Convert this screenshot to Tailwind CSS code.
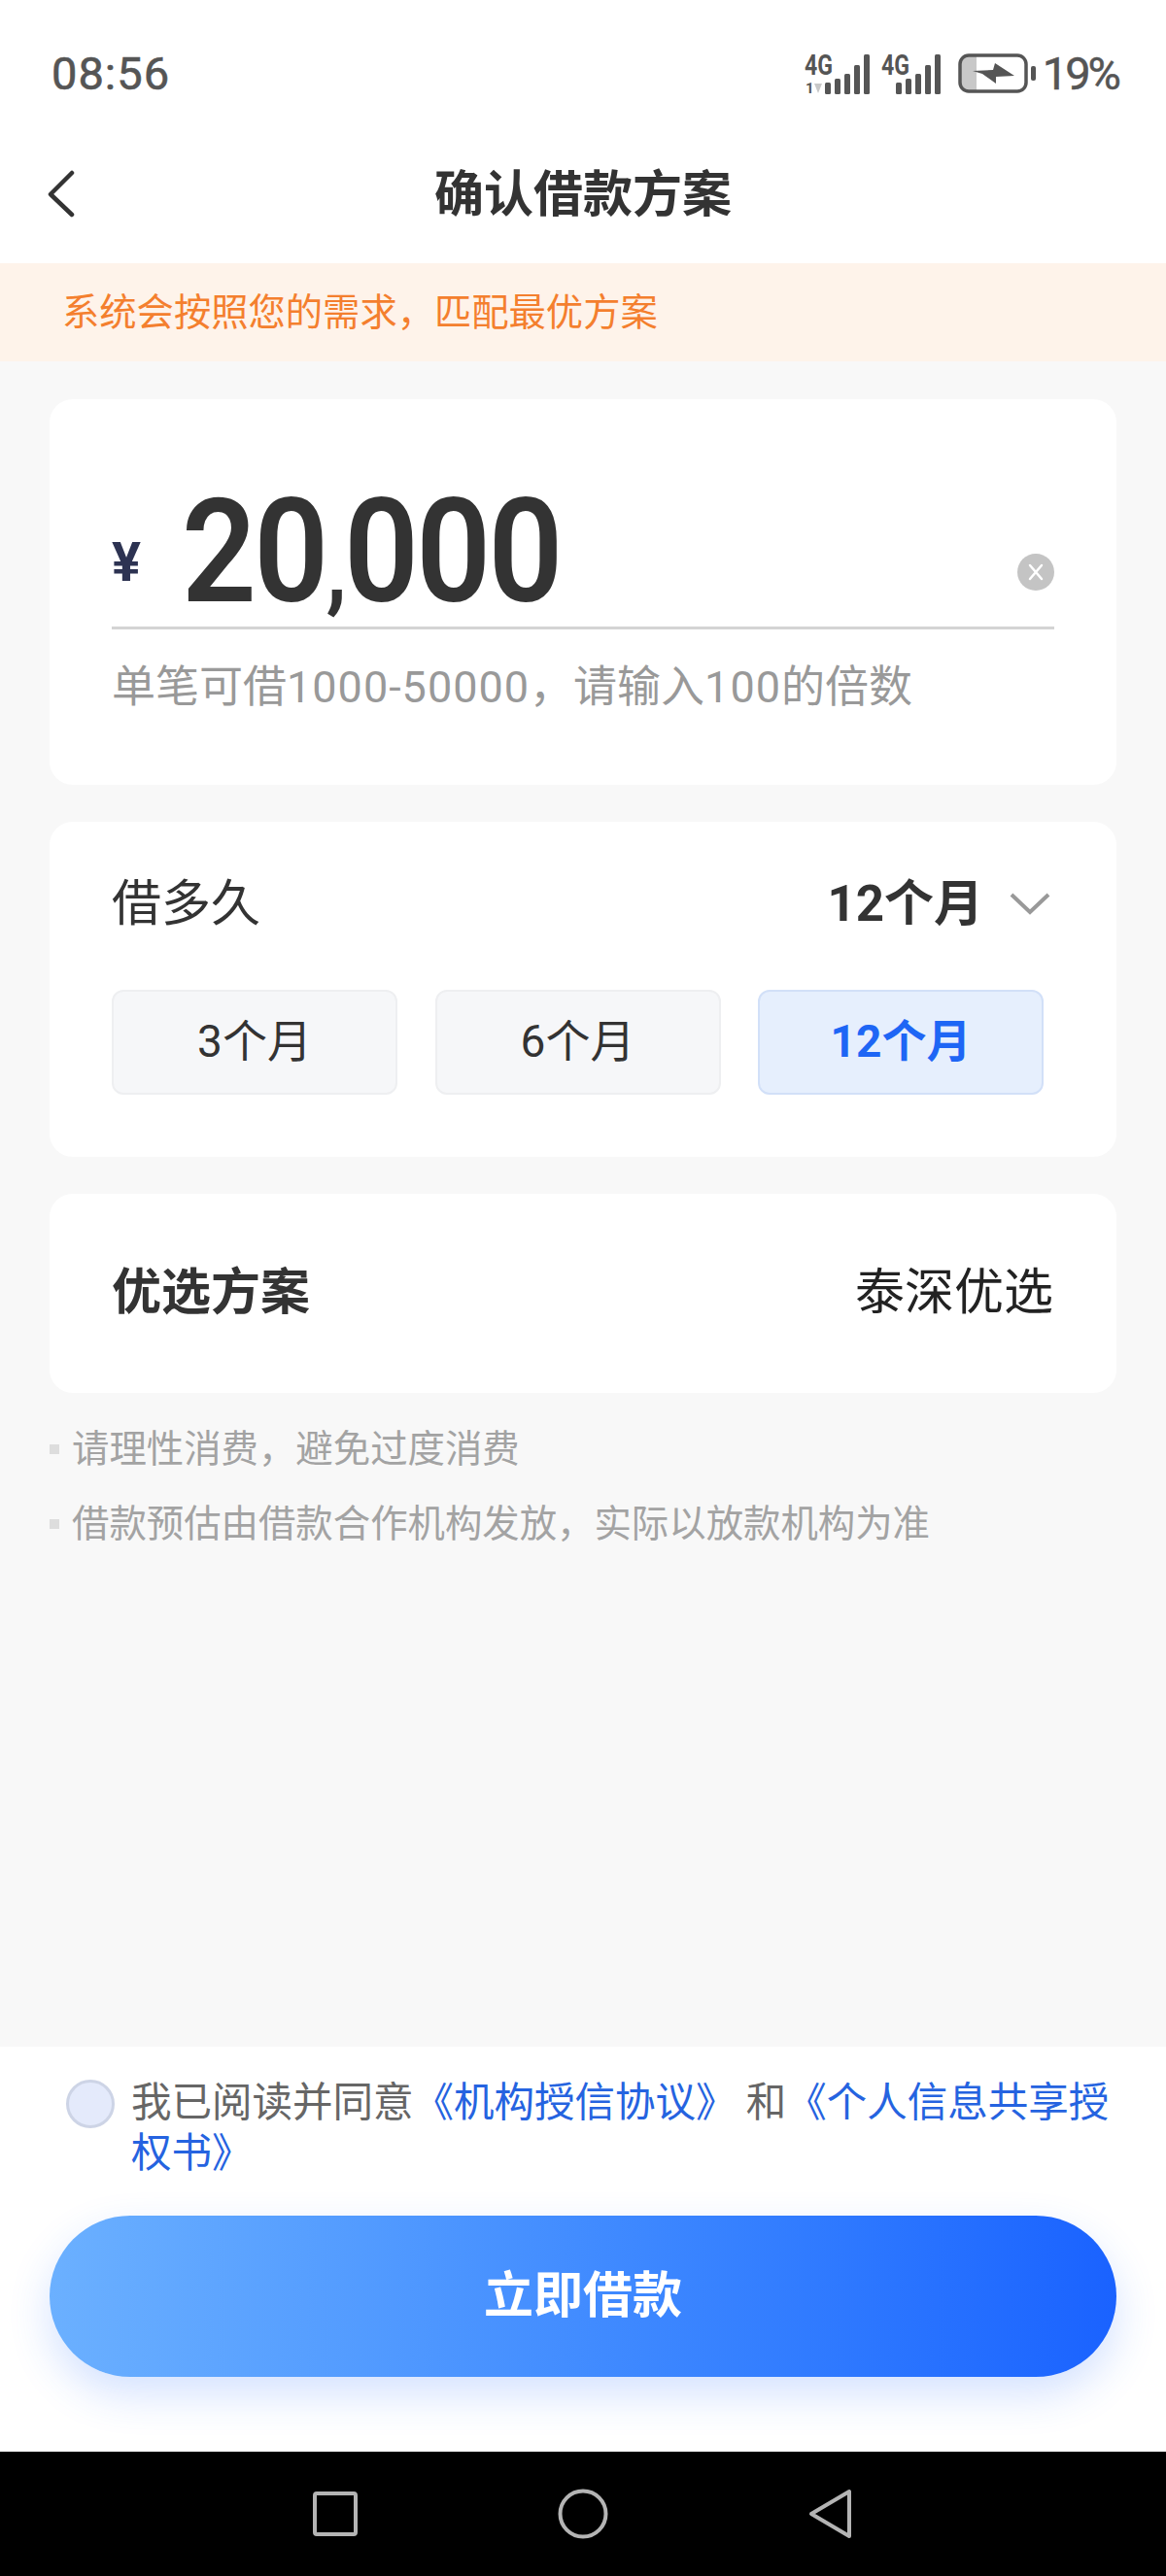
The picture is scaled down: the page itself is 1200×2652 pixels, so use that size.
<!DOCTYPE html>
<html lang="zh-CN">
<head>
    <meta charset="UTF-8">
    <meta name="viewport" content="width=device-width, initial-scale=1.0">
    <title>确认借款方案</title>
    <script src="https://cdn.jsdelivr.net/npm/@tailwindcss/browser@4"></script>
</head>
<body class="bg-[#f8f8f8] font-['Roboto','Noto_Sans_CJK_SC',sans-serif] text-[#333333]">
    <div class="flex h-[2652px] w-[1200px] flex-col overflow-hidden">
        <!-- Status bar -->
        <div class="flex h-[152px] shrink-0 items-start justify-between bg-white pl-[53px] pr-[49px] pt-[48px]">
            <span class="text-[47px] leading-[56px] tracking-[1px] text-[#555555] [-webkit-text-stroke:0.6px_#555555]">08:56</span>
            <div class="flex items-start">
                <svg class="mt-[8px] overflow-visible" width="68" height="41" viewBox="0 0 68 41" fill="#555555">
                    <text x="0" y="21" font-family="Roboto" font-weight="700" font-size="29" textLength="29" lengthAdjust="spacingAndGlyphs">4G</text>
                    <text x="1" y="40" font-family="Roboto" font-weight="700" font-size="15">1</text>
                    <path d="M10 30h8l-4 10z" fill="#c8c8c8"/>
                    <rect x="21" y="29" width="6" height="12" rx="1.5"/>
                    <rect x="31" y="25" width="6" height="16" rx="1.5"/>
                    <rect x="41" y="20" width="6" height="21" rx="1.5"/>
                    <rect x="51" y="11" width="6" height="30" rx="1.5"/>
                    <rect x="61" y="0" width="6" height="41" rx="1.5"/>
                </svg>
                <svg class="ml-[11px] mt-[8px] overflow-visible" width="62" height="41" viewBox="0 0 62 41" fill="#555555">
                    <text x="0" y="21" font-family="Roboto" font-weight="700" font-size="29" textLength="29" lengthAdjust="spacingAndGlyphs">4G</text>
                    <rect x="15" y="29" width="6" height="12" rx="1.5"/>
                    <rect x="25" y="25" width="6" height="16" rx="1.5"/>
                    <rect x="35" y="20" width="6" height="21" rx="1.5"/>
                    <rect x="45" y="11" width="6" height="30" rx="1.5"/>
                    <rect x="55" y="0" width="6" height="41" rx="1.5"/>
                </svg>
                <svg class="ml-[17px] mt-[7px]" width="81" height="41" viewBox="0 0 81 41">
                    <path d="M9 2h10v37H9a7 7 0 0 1-7-7V9a7 7 0 0 1 7-7z" fill="#c8c8c8"/>
                    <rect x="2" y="2" width="68" height="37" rx="9" fill="none" stroke="#555555" stroke-width="3.5"/>
                    <path d="M15 18l21-1 2-7 20 13-19 1v7l-14-10z" fill="#555555"/>
                    <rect x="75" y="13" width="5" height="15" rx="2" fill="#555555"/>
                </svg>
                <span class="ml-[6px] text-[47px] leading-[56px] tracking-[-3px] text-[#555555] [-webkit-text-stroke:0.5px_#555555]">19%</span>
            </div>
        </div>

        <!-- Nav -->
        <div class="relative flex h-[119px] shrink-0 items-center justify-center bg-white">
            <svg class="absolute left-[48px] top-[22px]" width="30" height="50" viewBox="0 0 30 50" fill="none" stroke="#333333" stroke-width="4.5" stroke-linecap="round" stroke-linejoin="round">
                <path d="M26 4L4 26l22 21"/>
            </svg>
            <h1 class="mb-[22px] text-[51px] leading-none font-bold">确认借款方案</h1>
        </div>

        <!-- Notice -->
        <div class="flex h-[101px] shrink-0 items-center bg-[#fef3ea] pl-[64px] text-[38.3px] text-[#f47f2e]">系统会按照您的需求，匹配最优方案</div>

        <main class="flex flex-1 flex-col px-[51px] pt-[39px]">
            <!-- Amount -->
            <section class="flex h-[397px] flex-col rounded-[24px] bg-white px-[64px] pt-[69px]">
                <div class="flex h-[168px] items-end border-b-[3px] border-[#d4d4d4]">
                    <span class="mb-[38px] w-[72px] text-[56px] leading-none font-bold text-[#2d3352]">¥</span>
                    <span class="-mb-[5px] origin-left scale-x-[0.91] text-[148px] leading-[162px] font-semibold tracking-[-3px]">20<span class="text-[100px] leading-none">,</span>000</span>
                    <span class="mb-[37px] ml-auto flex h-[38px] w-[38px] items-center justify-center rounded-full bg-[#c4c4c4]">
                        <svg width="20" height="20" viewBox="0 0 20 20" stroke="#ffffff" stroke-width="2.5" stroke-linecap="round"><path d="M4 3l12 14M16 3L4 17"/></svg>
                    </span>
                </div>
                <p class="mt-[32px] text-[45px] leading-[56px] text-[#999999]">单笔可借<span class="tracking-[1px]">1000-50000</span>，请输入<span class="tracking-[1px]">100</span>的倍数</p>
            </section>

            <!-- Term -->
            <section class="mt-[38px] h-[345px] rounded-[24px] bg-white px-[64px] pt-[55px]">
                <div class="flex h-[58px] items-center justify-between">
                    <span class="text-[51px] leading-none">借多久</span>
                    <div class="flex items-center">
                        <span class="text-[51px] leading-none font-bold">12个月</span>
                        <svg class="ml-[27px] mr-[4px]" width="42" height="24" viewBox="0 0 42 24" fill="none" stroke="#999999" stroke-width="4"><path d="M2 3l19 18L40 3"/></svg>
                    </div>
                </div>
                <div class="mt-[60px] flex gap-[38.5px]">
                    <div class="flex h-[108px] w-[294px] items-center justify-center rounded-[12px] border-2 border-[#eeeff1] bg-[#f6f7f9] pb-[2px] text-[46px]">3个月</div>
                    <div class="flex h-[108px] w-[294px] items-center justify-center rounded-[12px] border-2 border-[#eeeff1] bg-[#f6f7f9] pb-[2px] text-[46px]">6个月</div>
                    <div class="flex h-[108px] w-[294px] items-center justify-center rounded-[12px] border-2 border-[#d2e0f8] bg-[#e6effd] pb-[2px] text-[46px] font-bold text-[#1e66f5]">12个月</div>
                </div>
            </section>

            <!-- Plan -->
            <section class="mt-[38px] flex h-[205px] items-center justify-between rounded-[24px] bg-white pl-[64px] pr-[65px] text-[51px]">
                <span class="font-bold">优选方案</span>
                <span class="text-[#222222]">泰深优选</span>
            </section>

            <!-- Tips -->
            <ul class="mt-[31px] flex flex-col gap-[24px] text-[38.4px] leading-[53px] text-[#a3a3a3]">
                <li class="flex items-center"><span class="mr-[13px] h-[10px] w-[10px] bg-[#dddddd]"></span>请理性消费，避免过度消费</li>
                <li class="flex items-center"><span class="mr-[13px] h-[10px] w-[10px] bg-[#dddddd]"></span>借款预估由借款合作机构发放，实际以放款机构为准</li>
            </ul>
        </main>

        <!-- Footer -->
        <footer class="flex h-[417px] shrink-0 flex-col bg-white px-[51px] pt-[32px]">
            <div class="flex">
                <span class="ml-[17px] mt-[2px] h-[50px] w-[50px] shrink-0 rounded-full border-[3px] border-[#cdd4e6] bg-[#e4eafb]"></span>
                <p class="ml-[17px] w-[1020px] text-[41.5px] leading-[52px] text-[#666666]">我已阅读并同意<span class="text-[#2563e0]">《机构授信协议》</span> 和<span class="text-[#2563e0]">《个人信息共享授权书》</span></p>
            </div>
            <button class="mt-[38px] flex h-[166px] w-full items-center justify-center rounded-full bg-gradient-to-r from-[#6bb0ff] to-[#1a62ff] text-[51px] font-bold text-white shadow-[0_18px_44px_rgba(40,110,255,0.2)]">立即借款</button>
        </footer>

        <!-- Android nav -->
        <div class="relative flex h-[128px] shrink-0 items-center bg-black">
            <svg class="ml-[322px]" width="46" height="46" viewBox="0 0 46 46" fill="none" stroke="#b4b4b4" stroke-width="4" stroke-linejoin="round"><rect x="2" y="2" width="42" height="42" rx="2"/></svg>
            <svg class="ml-[206px]" width="52" height="52" viewBox="0 0 52 52" fill="none" stroke="#b4b4b4" stroke-width="4"><circle cx="26" cy="26" r="23.5"/></svg>
            <svg class="ml-[206px]" width="46" height="52" viewBox="0 0 46 52" fill="none" stroke="#b4b4b4" stroke-width="4" stroke-linejoin="round"><path d="M42 3v46L3 26z"/></svg>
        </div>
    </div>
</body>
</html>
